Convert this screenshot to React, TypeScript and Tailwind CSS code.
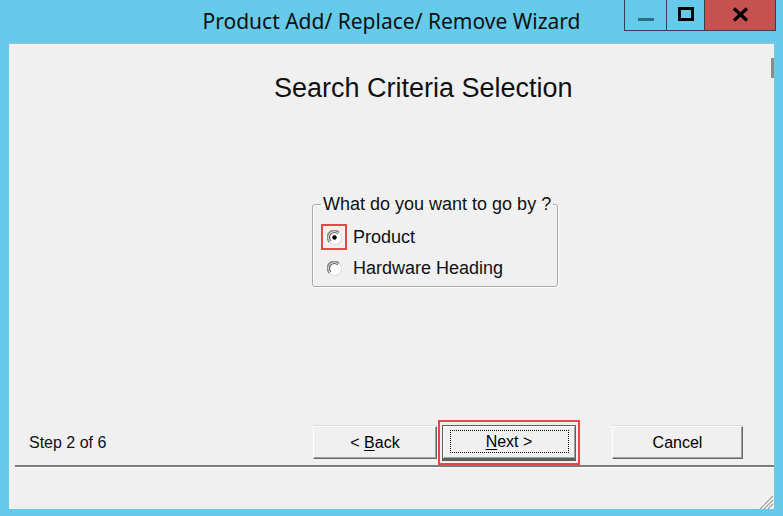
import React from 'react'

const sans = { fontFamily: '"Liberation Sans", Arial, sans-serif' }

function Radio({ checked }: { checked?: boolean }): React.JSX.Element {
  return (
    <svg width="15" height="15" viewBox="0 0 15 15">
      <circle cx="7.5" cy="7.5" r="6.5" fill="#ffffff" />
      <path d="M2.4 12.1 A6.5 6.5 0 0 1 12.1 2.4" fill="none" stroke="#8a8a8a" strokeWidth="1.6" />
      <path d="M3.9 10.8 A4.8 4.8 0 0 1 10.8 3.9" fill="none" stroke="#555555" strokeWidth="1.1" />
      <path d="M12.7 3 A6.5 6.5 0 0 1 3 12.7" fill="none" stroke="#e2e2e2" strokeWidth="1.3" />
      {checked && <circle cx="7.5" cy="7.5" r="2.2" fill="#000000" />}
    </svg>
  )
}

function TitleBar(): React.JSX.Element {
  return (
    <div className="grid h-[43px] grid-cols-[1fr_auto_1fr]">
      <div />
      <div
        className="pt-[6px] text-[21px] leading-[30px] text-[#111]"
        style={{ fontFamily: '"Noto Sans", "Open Sans", sans-serif' }}
      >
        Product Add/ Replace/ Remove Wizard
      </div>
      <div className="mr-[7px] flex self-start justify-self-end">
        <div className="flex h-[31px] border-b border-l border-[#33424c]">
          <div className="flex w-[42px] items-center justify-center border-r border-[#33424c]">
            <div className="mt-[8px] h-[3px] w-[16px] bg-[#2f6b82]" />
          </div>
          <div className="flex w-[38px] items-center justify-center border-r border-[#33424c]">
            <div className="mb-[3px] h-[14px] w-[16px] border-[3px] border-black" />
          </div>
          <div className="flex w-[71px] items-center justify-center border-r border-[#33424c] bg-[#c75050]">
            <svg width="17" height="15" viewBox="0 0 17 15" className="mb-[2px]">
              <path d="M2 1.5 L15 13.5 M15 1.5 L2 13.5" stroke="#000" strokeWidth="3.2" />
            </svg>
          </div>
        </div>
      </div>
    </div>
  )
}

function WinButton({ children, width }: { children: React.ReactNode; width: string }): React.JSX.Element {
  return (
    <div
      className={`flex h-[33px] ${width} items-center justify-center border-t border-l border-t-[#ffffff] border-l-[#ffffff] border-b border-r border-b-[#696969] border-r-[#696969] bg-[#f0f0f0] text-[16px] text-black shadow-[inset_-1px_-1px_0_#a0a0a0,0_-1px_0_#dcdcdc]`}
    >
      {children}
    </div>
  )
}

export default function App(): React.JSX.Element {
  return (
    <div className="h-[516px] w-[783px] overflow-hidden bg-[#66caea]" style={sans}>
      <TitleBar />

      <div className="relative ml-[9px] flex h-[466px] w-[765px] flex-col border-t border-[#a7bcc7] bg-[#f0f0f0]">
        <div className="absolute right-0 top-[14px] h-[20px] w-[3px] bg-[#8c8c8c]" />

        <div className="ml-[265px] mt-[28px] text-[27px] leading-[32px] text-[#111]">
          Search Criteria Selection
        </div>

        <fieldset className="ml-[303px] mt-[90px] w-[246px] rounded-[3px] border border-[#a9a9a9] pb-[8px] shadow-[1px_1px_0_#ffffff,inset_1px_1px_0_#ffffff]">
          <legend className="ml-[8px] px-[2px] text-[18px] leading-[20px] text-[#111]">
            What do you want to go by ?
          </legend>
          <div className="ml-[8px] mt-[10px] flex h-[26px] items-center">
            <div className="flex h-[26px] w-[26px] items-center justify-center border-2 border-[#e84545]">
              <Radio checked />
            </div>
            <span className="ml-[6px] text-[18px] leading-[20px] text-[#111]">Product</span>
          </div>
          <div className="ml-[8px] mt-[8px] flex h-[20px] items-center">
            <div className="flex w-[26px] justify-center">
              <Radio />
            </div>
            <span className="ml-[6px] text-[18px] leading-[20px] text-[#111]">Hardware Heading</span>
          </div>
        </fieldset>

        <div className="mt-[133px] flex h-[45px] items-center">
          <span className="ml-[20px] w-[284px] text-[16px] leading-[20px] text-[#111]">Step 2 of 6</span>
          <WinButton width="w-[124px]">
            <span>
              &lt; <span className="underline underline-offset-2">B</span>ack
            </span>
          </WinButton>
          <div className="ml-[1px] flex h-[45px] w-[142px] items-center justify-center border-2 border-[#e84545]">
            <div className="flex h-[36px] w-[134px] items-center justify-center border border-b-[3px] border-[#5e5e5e] bg-[#f0f0f0] shadow-[inset_1px_1px_0_#ffffff,inset_-1px_-1px_0_#a0a0a0]">
              <div className="flex h-[23px] w-[119px] items-center justify-center border border-dotted border-black text-[16px] text-black">
                <span>
                  <span className="underline underline-offset-2">N</span>ext &gt;
                </span>
              </div>
            </div>
          </div>
          <div className="ml-[32px]">
            <WinButton width="w-[131px]">Cancel</WinButton>
          </div>
        </div>

        <div className="ml-[6px] h-[2px] bg-[#7c7c7c] shadow-[0_1px_0_#ffffff]" />

        <div className="mt-auto flex justify-end">
          <svg width="16" height="15" viewBox="0 0 16 15">
            <path d="M15 2 L2 15 M15 6 L6 15 M15 10 L10 15" stroke="#a0a0a0" strokeWidth="1.2" />
            <path d="M16 3 L3 16 M16 7 L7 16 M16 11 L11 16" stroke="#ffffff" strokeWidth="1" />
          </svg>
        </div>
      </div>
    </div>
  )
}
